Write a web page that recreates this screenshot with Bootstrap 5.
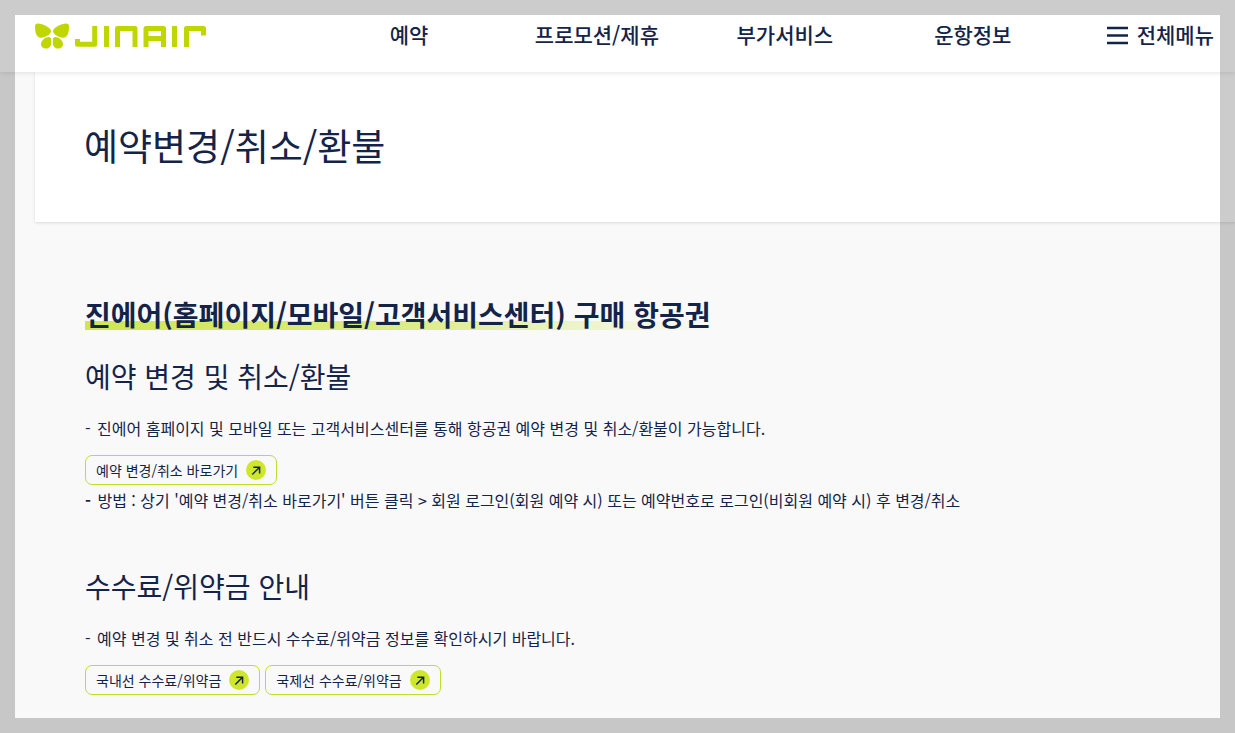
<!DOCTYPE html>
<html lang="ko">
<head>
<meta charset="utf-8">
<meta name="viewport" content="width=device-width, initial-scale=1">
<title>예약변경/취소/환불 - JINAIR</title>
<link href="https://cdn.jsdelivr.net/npm/bootstrap@5.3.0/dist/css/bootstrap.min.css" rel="stylesheet">
<style>
  :root { --ink: #142449; --side: 35px; }
  body { font-family: "Noto Sans CJK KR", sans-serif; font-size: 16px; line-height: 24px; color: var(--ink); background: #f9f9f9; }
  /* translucent frame laid over the window */
  .window-frame { border: 15px solid rgba(0, 0, 0, .2); z-index: 2000; pointer-events: none; }
  .site-header { height: 72px; padding: 0 21px 0 var(--side); background: #fff; box-shadow: 0 1px 5px rgba(0, 0, 0, .1); z-index: 10; }
  .site-header a, .menu-toggle { color: var(--ink); font-size: 21px; line-height: 32px; font-weight: 500; text-decoration: none; }
  .main-nav { margin: 0 40px 0 108px; }
  .page-title { margin-left: var(--side); padding: 46px 49px 50px; background: #fff; box-shadow: 0 1px 3px rgba(0, 0, 0, .12); }
  .page-title h1 { font-size: 37px; line-height: 54px; font-weight: 400; }
  .guide { padding: 72px 85px 30px; }
  .guide h2 { font-size: 28px; line-height: 40px; font-weight: 700; }
  .guide h3 { margin-bottom: 20px; font-size: 28px; line-height: 40px; font-weight: 400; }
  .guide section { margin-top: 22px; }
  .guide section + section { margin-top: 54px; }
  .guide p { margin-bottom: 15px; }
  .dash { margin-right: 2px; }
  .underlined { background: linear-gradient(90deg, #d0e650, #dcec84 50%, #f9f9f9) 0 27px / 100% 9px no-repeat; }
  .links { gap: 5px; margin-bottom: 3px; }
  .link-btn { height: 30px; padding: 0 10px; gap: 8px; border: 1px solid #c1dc2c; border-radius: 7px; color: var(--ink); font-size: 14px; line-height: 20px; text-decoration: none; }
</style>
</head>
<body>
<div class="window-frame position-fixed top-0 start-0 w-100 h-100"></div>

<svg class="d-none" aria-hidden="true">
  <symbol id="go" viewBox="0 0 20 20">
    <circle cx="10" cy="10" r="10" fill="#cfe72b"/>
    <path d="M6.300 14.500 13.300 7.500M7.300 7.200h6.300v6.300" fill="none" stroke="#142449" stroke-width="1.500"/>
  </symbol>
</svg>

<header class="site-header position-relative d-flex align-items-center">
  <a href="#" class="d-block flex-shrink-0" aria-label="JINAIR">
    <svg class="d-block" width="172" height="27" viewBox="0 0 172 27" fill="none" stroke="#bfd600" stroke-width="5" stroke-linejoin="round">
      <g fill="#bfd600" stroke="none">
        <path d="M3 .5C.8.5 0 1.500 0 3.500c0 6 1.500 11.300 6 11.300 4.500 0 10-4 10-6.500C16 4.500 7.500.5 3 .5Z"/>
        <path d="M31 .5c2.200 0 3 1 3 3 0 6-1.500 11.300-6 11.300-4.500 0-10-4-10-6.500C18 4.500 26.500.5 31 .5Z"/>
        <path d="M13.500 14c1.800 0 2.700 1 2.700 3v3c0 3-2 5.500-5 5.500-3 0-5.200-1.700-5.200-4.200C6 17.500 10.500 14 13.500 14Z"/>
        <path d="M20.500 14c-1.800 0-2.700 1-2.700 3v3c0 3 2 5.500 5 5.500 3 0 5.200-1.700 5.200-4.200C28 17.500 23.500 14 20.500 14Z"/>
      </g>
      <path d="M42.500 16v5.300h17.200V3M71.500 3v21M82.500 24V5.500h17.500V24M111 24V5.500h17.500V24M111 15.500h17.500M139.500 3v21M151.500 24V5.500h17V12.500"/>
    </svg>
  </a>
  <nav class="main-nav flex-grow-1 pb-1">
    <div class="row g-0 text-center text-nowrap">
      <a class="col" href="#">예약</a>
      <a class="col" href="#">프로모션/제휴</a>
      <a class="col" href="#">부가서비스</a>
      <a class="col" href="#">운항정보</a>
    </div>
  </nav>
  <button type="button" class="menu-toggle d-flex align-items-center gap-2 p-0 pb-1 border-0 bg-transparent text-nowrap">
    <svg width="22" height="22" viewBox="0 0 22 22" stroke="#142449" stroke-width="2.500" aria-hidden="true"><path d="M0 5h21M0 12.500h21M0 20h21"/></svg>
    전체메뉴
  </button>
</header>

<main>
  <div class="page-title"><h1 class="m-0">예약변경/취소/환불</h1></div>
  <div class="guide">
    <h2 class="mb-0"><span class="underlined d-inline-block">진에어(홈페이지/모바일/고객서비스센터) 구매 항공권</span></h2>
    <section>
      <h3>예약 변경 및 취소/환불</h3>
      <p><span class="dash">-</span> 진에어 홈페이지 및 모바일 또는 고객서비스센터를 통해 항공권 예약 변경 및 취소/환불이 가능합니다.</p>
      <div class="links d-flex">
        <a class="link-btn d-flex align-items-center" href="#">예약 변경/취소 바로가기 <svg width="20" height="20" aria-hidden="true"><use href="#go"/></svg></a>
      </div>
      <p class="mb-0"><b class="dash">-</b> 방법 : 상기 '예약 변경/취소 바로가기' 버튼 클릭 &gt; 회원 로그인(회원 예약 시) 또는 예약번호로 로그인(비회원 예약 시) 후 변경/취소</p>
    </section>
    <section>
      <h3>수수료/위약금 안내</h3>
      <p><span class="dash">-</span> 예약 변경 및 취소 전 반드시 수수료/위약금 정보를 확인하시기 바랍니다.</p>
      <div class="links d-flex">
        <a class="link-btn d-flex align-items-center" href="#">국내선 수수료/위약금 <svg width="20" height="20" aria-hidden="true"><use href="#go"/></svg></a>
        <a class="link-btn d-flex align-items-center" href="#">국제선 수수료/위약금 <svg width="20" height="20" aria-hidden="true"><use href="#go"/></svg></a>
      </div>
    </section>
  </div>
</main>
<script src="https://cdn.jsdelivr.net/npm/bootstrap@5.3.0/dist/js/bootstrap.bundle.min.js"></script>
</body>
</html>
